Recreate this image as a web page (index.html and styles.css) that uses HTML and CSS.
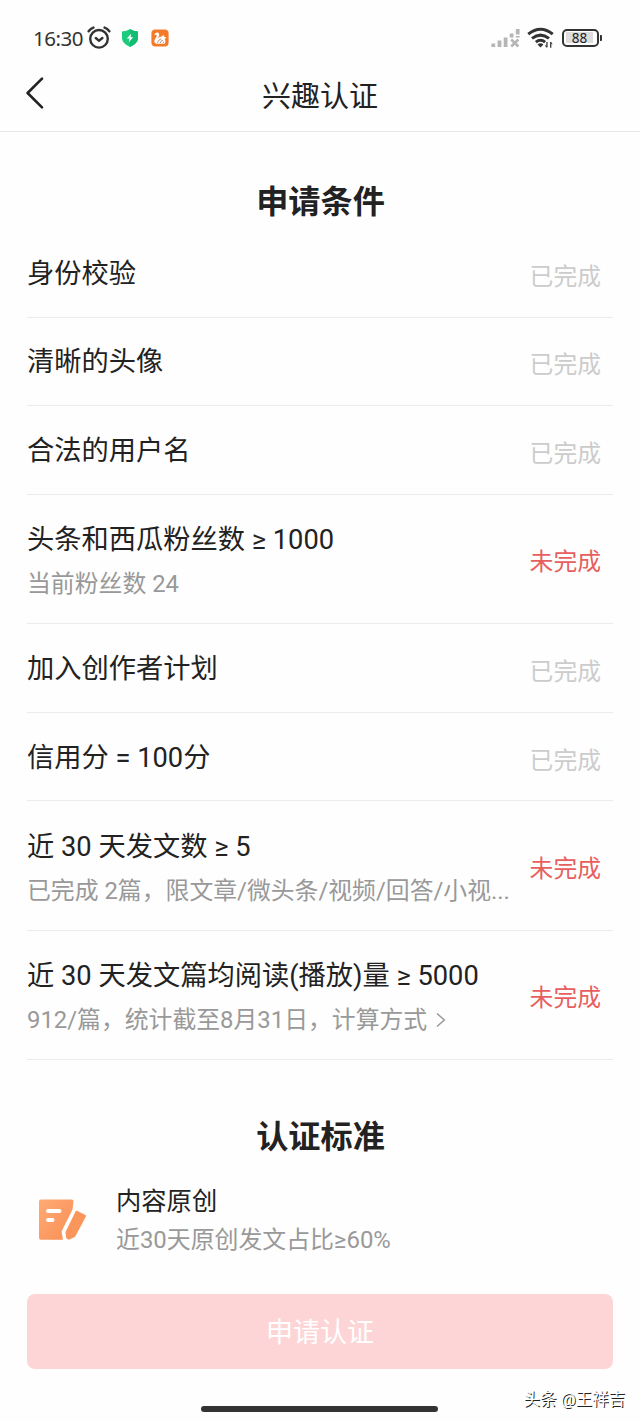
FILE: index.html
```html
<!DOCTYPE html>
<html lang="zh-CN">
<head>
<meta charset="utf-8">
<title>兴趣认证</title>
<link rel="stylesheet" href="styles.css">
</head>
<body>
<div class="screen">
  <header class="status-bar">
    <span class="time">16:30</span>
    <svg class="icon-alarm" width="24" height="24" viewBox="0 0 24 24" fill="none" stroke="#333" stroke-width="2.4" stroke-linecap="round">
      <circle cx="12" cy="12.8" r="8.8"/><path d="M8.8 12l3.2 2.8 3.4-2.8"/><path d="M1.6 5.2Q3.6 2.4 6.4 1.6M17.6 1.6Q20.4 2.4 22.4 5.2"/>
    </svg>
    <svg class="icon-shield" width="18" height="20" viewBox="0 0 18 20">
      <path d="M9 1Q12 3.2 17 3.6V10.5Q16.6 15.6 9 19Q1.4 15.6 1 10.5V3.6Q6 3.2 9 1Z" fill="#1ccb7c"/>
      <path d="M9 1Q12 3.2 17 3.6V10.5Q16.6 15.6 9 19Z" fill="#12bd73"/>
      <path d="M10.2 5.8L5.8 10.6H8.5L7.8 14.2L12.2 9.2H9.6Z" fill="#fff"/>
    </svg>
    <svg class="icon-browser" width="18" height="18" viewBox="0 0 18 18">
      <rect x=".4" y=".4" width="17.2" height="17.2" rx="4" fill="#f47a2a"/>
      <path d="M3.3 6.2Q3.8 3.4 6.2 3.5Q8.7 3.8 8.2 6.6Q7.8 8.6 6.2 10Q8.6 7.4 11.3 7.2L12.4 5.6L13 7.6L15.5 8.7L13.5 10Q15.3 12 13.6 14.8H5.3Q2.5 13.6 3.6 10.8Q6 7.8 5.8 6.1Q4.6 5.4 3.3 6.2Z" fill="#fff"/>
      <path d="M6.3 13.8Q7.3 10.6 10.4 9.8M9 14Q9.5 11.8 12 11.2M11.8 14.2L13 12.7" fill="none" stroke="#aa8470" stroke-width=".9"/>
    </svg>
    <span class="spacer"></span>
    <svg class="icon-signal" width="30" height="20" viewBox="0 0 30 20" fill="none" stroke="#b5b5b5">
      <path d="M2.3 19v-3.6M8.5 19v-6.6M14.6 19V9.4M20.6 9.6V5.4M26.7 6.5V1M26.7 9.6V8" stroke-width="3.8"/>
      <path d="M20.2 11.5l7.2 7M27.4 11.5l-7.2 7" stroke-width="2.5"/>
    </svg>
    <svg class="icon-wifi" width="27" height="22" viewBox="0 0 28 22" fill="none" stroke="#333" stroke-width="3.2">
      <path d="M1.3 7Q14-3.2 26.7 7M5.2 11.4Q14 4.7 22.8 11.4M9.2 15.3Q14 11.4 18.8 15.3"/>
      <path d="M10.9 17.8Q14 15.3 17 17.8L14 20.8Z" fill="#333" stroke="none"/>
      <path d="M20.7 15.2v5.4M24.6 21v-5.8" stroke-width="1.3"/><path d="M20 18.6l-1.5-.2 1.6 2.5 1-.5zM25.3 17.3l1.4.3-2-2.7z" fill="#333" stroke="none"/>
    </svg>
    <span class="battery"><span class="battery-body"><span class="battery-level">88</span></span><i class="battery-tip"></i></span>
  </header>

  <nav class="nav-bar">
    <svg class="icon-back" width="18" height="32" viewBox="0 0 18 32" fill="none" stroke="#222" stroke-width="2.6" stroke-linecap="round" stroke-linejoin="round"><path d="M16 1.7L1.6 16L16 30.3"/></svg>
    <h1 class="nav-title">兴趣认证</h1>
  </nav>

  <main class="content">
    <h2 class="section-title">申请条件</h2>
    <ul class="conditions">
      <li class="row"><div class="info"><p class="name">身份校验</p></div><span class="state">已完成</span></li>
      <li class="row"><div class="info"><p class="name">清晰的头像</p></div><span class="state">已完成</span></li>
      <li class="row"><div class="info"><p class="name">合法的用户名</p></div><span class="state">已完成</span></li>
      <li class="row tall"><div class="info"><p class="name">头条和西瓜粉丝数 ≥ 1000</p><p class="note">当前粉丝数 24</p></div><span class="state pending">未完成</span></li>
      <li class="row"><div class="info"><p class="name">加入创作者计划</p></div><span class="state">已完成</span></li>
      <li class="row"><div class="info"><p class="name">信用分 = 100分</p></div><span class="state">已完成</span></li>
      <li class="row tall"><div class="info"><p class="name">近 30 天发文数 ≥ 5</p><p class="note">已完成 2篇，限文章/微头条/视频/回答/小视...</p></div><span class="state pending">未完成</span></li>
      <li class="row tall"><div class="info"><p class="name">近 30 天发文篇均阅读(播放)量 ≥ 5000</p><p class="note">912/篇，统计截至8月31日，计算方式<svg class="icon-more" width="10" height="16" viewBox="0 0 10 16" fill="none" stroke="#999" stroke-width="1.5"><path d="M1 1.5L8.3 8L1 14.5"/></svg></p></div><span class="state pending">未完成</span></li>
    </ul>

    <h2 class="section-title standards-title">认证标准</h2>
    <section class="standard">
      <svg class="icon-original" width="50" height="44" viewBox="0 0 50 44">
        <defs><linearGradient id="paper" x1="0" y1="0" x2="1" y2="1"><stop offset="0" stop-color="#ffaa74"/><stop offset="1" stop-color="#f88f55"/></linearGradient></defs>
        <path d="M3 1.5H33.5Q36 1.5 35.4 4L34.5 11.5L23.5 33.5L25 41.8H3Q1 41.8 1 39.8V3.5Q1 1.5 3 1.5Z" fill="url(#paper)"/>
        <path d="M39 12.8L47.5 17Q48.4 17.6 47.9 18.5L37.2 38.8L31.5 41.5Q28.8 42 28.2 39.5L27.4 34.2L37.7 13.3Q38.2 12.4 39 12.8Z" fill="#fa965c"/>
        <path d="M10 13H21.5M10 22H14.5" stroke="#fff" stroke-width="4" stroke-linecap="round"/>
      </svg>
      <div><p class="standard-name">内容原创</p><p class="standard-note">近30天原创发文占比≥60%</p></div>
    </section>
    <button class="apply" type="button">申请认证</button>
  </main>

  <footer class="footer"><i class="home-indicator"></i><span class="watermark">头条 @王祥吉</span></footer>
</div>
</body>
</html>
```
FILE: styles.css
```css
* { box-sizing: border-box; }
body { margin: 0; background: #fefefe; color: #222; font-family: Roboto, "Noto Sans CJK SC", sans-serif; }
h1, h2, p, ul { margin: 0; padding: 0; list-style: none; }
svg { display: block; flex: none; }
.screen { width: 640px; height: 1422px; display: flex; flex-direction: column; overflow: hidden; position: relative; }

.status-bar { height: 72px; display: flex; align-items: center; padding: 3px 38px 0 33px; flex: none; }
.time { font: 400 20.5px/24px "Noto Sans", sans-serif; color: #333; width: 54px; white-space: nowrap; letter-spacing: -.5px; }
.icon-shield { margin-left: 10px; }
.icon-browser { margin-left: 12px; }
.spacer { flex: 1; }
.icon-signal { margin-right: 6px; }
.icon-wifi { margin-right: 8px; }
.battery { display: flex; align-items: center; gap: 1px; }
.battery-body { width: 37px; height: 18px; border: 2.4px solid #333; border-radius: 5px; padding: 1.5px; }
.battery-level { display: block; width: 27px; height: 11px; background: #ddd; font: 400 13.5px/12px "Noto Sans", sans-serif; text-align: center; padding-left: 1px; color: #222; }
.battery-tip { width: 2px; height: 6px; background: #333; border-radius: 0 1px 1px 0; }

.nav-bar { height: 60px; flex: none; border-bottom: 1px solid #e6e6e6; display: grid; grid-template-columns: 60px 1fr 60px; align-items: center; }
.icon-back { margin: -18px 0 0 26px; }
.nav-title { font-size: 29px; line-height: 40px; font-weight: 400; text-align: center; margin-top: -9px; }

.content { padding: 0 27px; flex: none; }
.section-title { font-size: 32.2px; line-height: 46px; font-weight: 700; text-align: center; padding: 47px 0 0 1px; height: 97px; }
.row { height: 88.6px; border-bottom: 1px solid #ebebeb; display: flex; justify-content: space-between; align-items: center; padding: 2px 12px 0 0; }
.row.tall { height: 129.4px; padding-top: 3px; }
.info { white-space: nowrap; }
.name { font-size: 27.25px; line-height: 40px; }
.note { font-size: 23.85px; line-height: 34px; color: #999; margin-top: 7px; display: flex; align-items: center; }
.state { font-size: 23.8px; line-height: 34px; color: #ccc; padding-top: 6px; }
.pending { color: #e85f60; padding-top: 4px; }
.icon-more { margin-left: 9px; }

.standards-title { height: 119px; padding-top: 54px; }
.standard { height: 115px; display: flex; padding-left: 11px; gap: 28px; }
.icon-original { margin-top: 19px; }
.standard-name { font-size: 25.3px; line-height: 38px; margin-top: 4px; }
.standard-note { font-size: 23.9px; line-height: 36px; color: #999; margin-top: 1px; }
.apply { width: 100%; height: 75px; border: 0; border-radius: 8px; background: #fed5d6; color: #fff; font: 400 27px/40px Roboto, "Noto Sans CJK SC", sans-serif; padding: 3px 0 0; }

.footer { flex: 1; display: grid; grid-template-columns: 201px 237px 1fr; }
.home-indicator { grid-column: 2; height: 6px; border-radius: 3px; background: #333; margin-top: 37px; }
.watermark { grid-column: 3; font-size: 16.5px; line-height: 24px; color: #fff; text-shadow: 1px 1px 0 #222; justify-self: end; margin: 19px 15px 0 0; white-space: nowrap; }
```
